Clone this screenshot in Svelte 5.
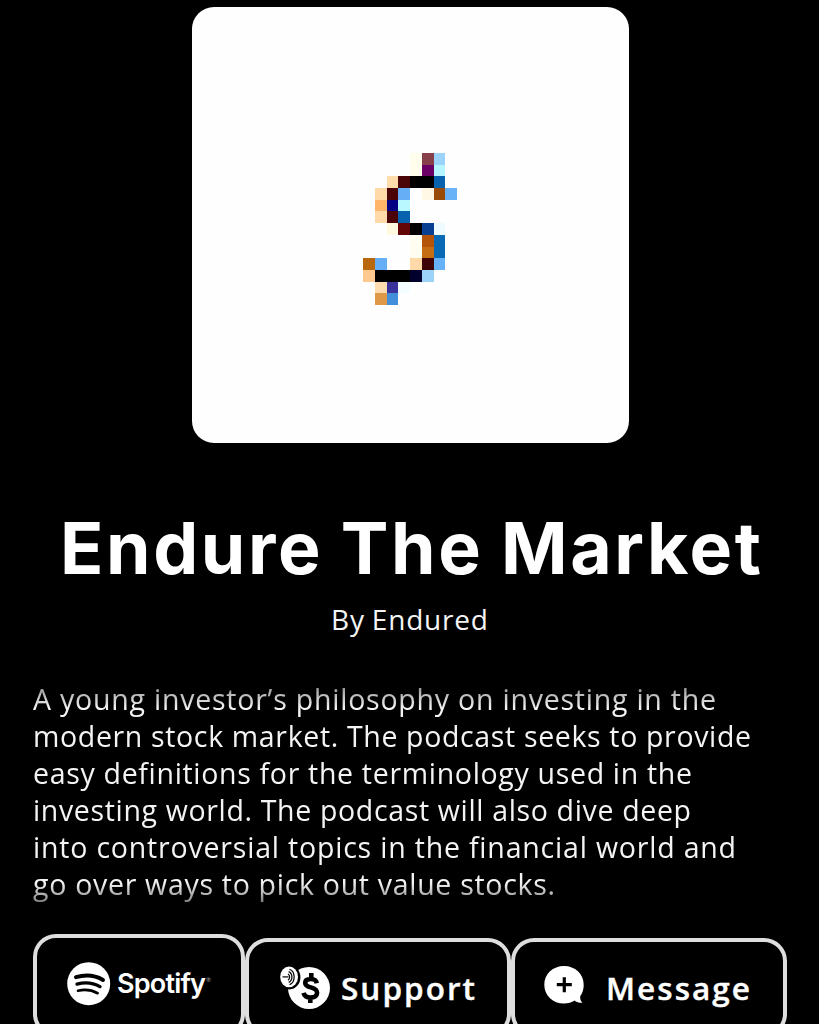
<script lang="ts">
  const lines = [
    { text: "A young investor’s philosophy on investing in the", width: 683 },
    { text: "modern stock market. The podcast seeks to provide", width: 718 },
    { text: "easy definitions for the terminology used in the", width: 659 },
    { text: "investing world. The podcast will also dive deep", width: 658 },
    { text: "into controversial topics in the financial world and", width: 703 },
    { text: "go over ways to pick out value stocks.", width: 522 },
  ];

  // [column, row, colour, columns, rows]
  const pixels: [number, number, string, number?, number?][] = [
    [4, 0, "#fffdec", 1, 2],
    [5, 0, "#87404a"],
    [6, 0, "#9bd3fb"],
    [5, 1, "#6b0064"],
    [6, 1, "#b5f5ff"],
    [2, 2, "#ffdcab"],
    [3, 2, "#4a0508"],
    [4, 2, "#000", 2],
    [6, 2, "#0862ae"],
    [1, 3, "#ffdaa8"],
    [2, 3, "#4a0207"],
    [3, 3, "#66aef5"],
    [5, 3, "#fff8e4"],
    [6, 3, "#9a4b08"],
    [7, 3, "#6ab2f7"],
    [1, 4, "#ffb66b"],
    [2, 4, "#030083"],
    [3, 4, "#b9f8ff"],
    [1, 5, "#ffdaa8"],
    [2, 5, "#4a0207"],
    [3, 5, "#0862ae"],
    [2, 6, "#fffadf"],
    [3, 6, "#640607"],
    [4, 6, "#000"],
    [5, 6, "#083f91"],
    [6, 6, "#effcff"],
    [4, 7, "#fffcf0", 1, 2],
    [5, 7, "#b35408"],
    [6, 7, "#0869b5", 1, 2],
    [5, 8, "#c46d12"],
    [0, 9, "#b9670c"],
    [1, 9, "#66aef5"],
    [4, 9, "#ffdaa8"],
    [5, 9, "#3e0307"],
    [6, 9, "#66b1f7"],
    [0, 10, "#ffc88f"],
    [1, 10, "#000", 3],
    [4, 10, "#02002d"],
    [5, 10, "#9bd3fb"],
    [1, 11, "#ffdcb0"],
    [2, 11, "#3a329c"],
    [3, 11, "#f4fdff"],
    [1, 12, "#df9847"],
    [2, 12, "#438edb"],
  ];

  // Spreads the letters so that the text spans the given width.
  function fit(node: HTMLElement, width: number) {
    const count = (node.textContent ?? "").length;
    const natural = node.getBoundingClientRect().width;
    const gap = (width - natural) / (count - 1);
    node.style.letterSpacing = `${gap}px`;
    node.style.marginRight = `${-gap}px`;
  }
</script>

<main class="page">
  <div class="cover">
    <svg class="dollar" viewBox="0 0 8 13" preserveAspectRatio="none" shape-rendering="crispEdges" aria-hidden="true">
      {#each pixels as [x, y, fill, w = 1, h = 1]}
        <rect {x} {y} width={w} height={h} {fill} />
      {/each}
    </svg>
  </div>

  <h1><span use:fit={701}>Endure The Market</span></h1>
  <p class="author"><span use:fit={157}>By Endured</span></p>

  <p class="description">
    {#each lines as line}
      <span class="line"><span use:fit={line.width}>{line.text}</span></span>
    {/each}
  </p>

  <div class="actions">
    <button class="btn spotify">
      <svg width="44" height="44" viewBox="0 0 44 44" aria-hidden="true">
        <circle cx="21.7" cy="21.7" r="21.5" fill="#fff" />
        <g fill="none" stroke="#000" stroke-linecap="round">
          <path d="M9 15.2C18 12.6 28.5 13.6 36 17.9" stroke-width="4" />
          <path d="M10 22.1C18 19.9 26.5 20.9 33 24.6" stroke-width="3.3" />
          <path d="M11 28.7C17.5 27.2 24.5 27.8 30.6 31.2" stroke-width="2.7" />
        </g>
      </svg>
      <span class="wordmark"><span use:fit={89}>Spotify</span></span>
      <span class="reg">®</span>
    </button>
    <button class="btn support">
      <svg width="52" height="46" viewBox="0 0 52 46" aria-hidden="true">
        <circle cx="29" cy="24" r="21" fill="#fff" />
        <path
          d="M36.8 19.3C36.2 16.2 34 15 30.8 15C27.3 15 25.2 16.5 25.2 18.9C25.2 24.7 37.1 22 37.1 28.7C37.1 31.8 34.5 33.5 30.6 33.5C26.7 33.5 24.3 32 23.5 28.9M31.3 9V15.5M30.3 33.5V39"
          fill="none"
          stroke="#000"
          stroke-width="4.6"
        />
        <ellipse cx="9.6" cy="13.2" rx="10.8" ry="12.2" fill="#000" />
        <ellipse cx="9.1" cy="12.9" rx="8.9" ry="10.4" fill="#fff" />
        <g fill="none" stroke="#000" stroke-width="1.2">
          <path d="M2.5 12.9H8.5" />
          <path d="M8 10C10.2 11.3 10.2 14.8 8 16.3" />
          <path d="M8.7 7.6C13 9.8 13 16.3 8.7 18.5" />
          <path d="M9.5 5.3C15.7 7.8 15.7 18.1 9.5 20.8" />
        </g>
      </svg>
      <span class="label"><span use:fit={134}>Support</span></span>
    </button>
    <button class="btn message">
      <svg width="40" height="40" viewBox="0 0 40 40" aria-hidden="true">
        <path
          d="M20 1C9 1 .3 9 .3 19.7C.3 30.5 9 38.5 20 38.5C24 38.5 27.7 37.5 30.8 35.6C32.3 37.3 35 38.2 38.5 37.5C36.8 36.3 36 34.5 36.2 31.2C38.6 28 39.7 24 39.7 19.7C39.7 9 31 1 20 1Z"
          fill="#fff"
        />
        <path d="M20.3 12.2V27.2M12.8 19.7H27.8" stroke="#000" stroke-width="3.2" />
      </svg>
      <span class="label"><span use:fit={144}>Message</span></span>
    </button>
  </div>
</main>

<style>
  :global(body) {
    background: #000;
    overflow: hidden;
  }
  .page {
    box-sizing: border-box;
    height: 1024px;
    overflow: hidden;
    padding-top: 7px;
    background: #000;
    color: #fff;
    font-family: "Open Sans", sans-serif;
  }
  .cover {
    box-sizing: border-box;
    width: 437px;
    height: 436px;
    margin-left: 192px;
    padding: 146px 0 0 171px;
    border-radius: 22px;
    background: #fefefe;
  }
  .dollar {
    display: block;
    width: 94px;
    height: 152px;
  }
  h1 {
    margin: 59px 0 0 2px;
    font-family: Inter, sans-serif;
    font-size: 71.5px;
    font-weight: 700;
    line-height: 92px;
    text-align: center;
    white-space: nowrap;
    word-spacing: -2px;
  }
  .author {
    margin: 6px 0 0;
    font-size: 28px;
    line-height: 38px;
    text-align: center;
    color: #f4f4f4;
    word-spacing: -1px;
  }
  .description {
    margin: 43px 0 0 33px;
    font-size: 28.5px;
    line-height: 37px;
    color: #f4f4f4;
    mask-image: linear-gradient(rgb(0 0 0 / 50%), #000 27px, #000 202px, rgb(0 0 0 / 50%) 222px);
  }
  .line {
    display: block;
    white-space: nowrap;
  }
  .actions {
    display: flex;
    align-items: flex-end;
    margin: 31px 0 0 33px;
  }
  .btn {
    box-sizing: border-box;
    display: flex;
    flex: none;
    align-items: flex-start;
    height: 99px;
    padding: 0;
    border: 4px solid #dedede;
    border-radius: 23px;
    background: #000;
    color: #fff;
    font-family: inherit;
    white-space: nowrap;
  }
  .btn svg {
    flex: none;
  }
  .spotify {
    width: 212px;
    height: 103px;
    padding: 24px 0 0 30px;
  }
  .wordmark {
    margin: 5px 0 0 6px;
    font-family: Inter, sans-serif;
    font-size: 27px;
    font-weight: 600;
    line-height: 34px;
  }
  .reg {
    margin: 13px 0 0;
    font-size: 6px;
    line-height: 10px;
    color: #aaa;
  }
  .support {
    width: 266px;
    padding: 22px 0 0 31px;
  }
  .message {
    width: 276px;
    padding: 23px 0 0 29px;
  }
  .label {
    font-size: 31.5px;
    font-weight: 600;
    line-height: 42px;
    -webkit-text-stroke: 0.4px #fff;
  }
  .support .label {
    margin: 3px 0 0 9px;
  }
  .message .label {
    margin: 2px 0 0 22px;
  }
</style>
